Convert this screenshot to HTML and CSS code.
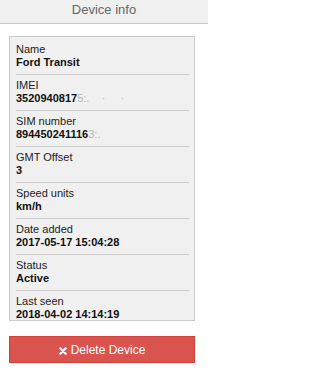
FILE: index.html
```html
<!DOCTYPE html>
<html>
<head>
<meta charset="utf-8">
<link rel="stylesheet" href="styles.css">
</head>
<body>
<div class="page">
<div class="header">Device info</div>
<div class="panel">
  <div class="row"><div class="label">Name</div><div class="value">Ford Transit</div></div>
  <div class="row"><div class="label">IMEI</div><div class="value">3520940817<span class="redact">5:.&nbsp;&nbsp;&nbsp;&nbsp;·&nbsp;&nbsp;&nbsp;&nbsp;&nbsp;·</span></div></div>
  <div class="row"><div class="label">SIM number</div><div class="value">894450241116<span class="redact">3:.</span></div></div>
  <div class="row"><div class="label">GMT Offset</div><div class="value">3</div></div>
  <div class="row"><div class="label">Speed units</div><div class="value">km/h</div></div>
  <div class="row"><div class="label">Date added</div><div class="value">2017-05-17 15:04:28</div></div>
  <div class="row"><div class="label">Status</div><div class="value">Active</div></div>
  <div class="row"><div class="label">Last seen</div><div class="value">2018-04-02 14:14:19</div></div>
</div>
<button class="btn-danger" type="button">
  <svg class="icon" width="8" height="8" viewBox="0 0 8 8"><path d="M1.3 1.3 L6.7 6.7 M6.7 1.3 L1.3 6.7" stroke="#fff" stroke-width="2.2" stroke-linecap="round" fill="none"/></svg>
  <span>Delete Device</span>
</button>
</div>
</body>
</html>
```
FILE: styles.css
```css
html, body {
  margin: 0;
  padding: 0;
  background: #ffffff;
  font-family: "Liberation Sans", Arial, sans-serif;
}

.page {
  width: 208px;
}

.header {
  background: #f0f0f0;
  border-bottom: 1px solid #c8c8c8;
  color: #666666;
  font-size: 13px;
  line-height: 16px;
  padding: 2px 0 5px;
  text-align: center;
}

.panel {
  box-sizing: border-box;
  margin: 12px 0 0 9px;
  width: 186px;
  height: 285px;
  border: 1px solid #cccccc;
  background: #f0f0f0;
  overflow: hidden;
  padding: 2px 5px 0 6px;
}

.row {
  padding: 4px 0 5px;
  border-bottom: 1px solid #cccccc;
}

.row:last-child {
  border-bottom: none;
}

.label {
  font-size: 11px;
  line-height: 13px;
  color: #222222;
}

.value {
  font-size: 11px;
  line-height: 13px;
  font-weight: bold;
  color: #111111;
  white-space: nowrap;
}

.redact {
  color: #b8b8b8;
  font-weight: normal;
}

.btn-danger {
  box-sizing: border-box;
  display: flex;
  align-items: center;
  justify-content: center;
  gap: 4px;
  margin: 15px 0 0 9px;
  width: 186px;
  height: 27px;
  padding: 0;
  background: #d9534f;
  border: 1px solid #d43f3a;
  border-radius: 0;
  color: #ffffff;
  font-family: "Liberation Sans", Arial, sans-serif;
  font-size: 12px;
  line-height: 14px;
}

.icon {
  display: block;
  margin-top: 3px;
}
```
